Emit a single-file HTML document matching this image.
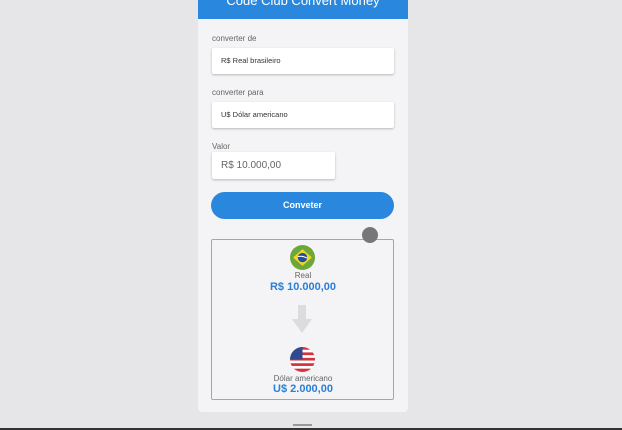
<!DOCTYPE html>
<html><head><style>
*{margin:0;padding:0;box-sizing:border-box}
body{width:622px;height:430px;background:#e6e5e8;font-family:"Liberation Sans",sans-serif;position:relative;overflow:hidden}
.card{position:absolute;left:198px;top:0;width:210px;height:412px;background:#f4f3f5;border-radius:0 0 4px 4px}
.hdr{position:absolute;left:198px;top:0;width:210px;height:19px;background:#2a87de;overflow:hidden}
.hdr span{position:absolute;left:0;right:0;top:-7px;text-align:center;color:#fff;font-size:13px}
.lbl{position:absolute;left:212px;font-size:8px;color:#666}
.box{position:absolute;left:212px;width:182px;height:26px;background:#fff;border-radius:2px;box-shadow:0 1px 2px rgba(0,0,0,.25);font-size:7.5px;color:#333;padding:8px 0 0 9px}
.btn{position:absolute;left:211px;top:192px;width:183px;height:27px;background:#2a87de;border-radius:14px;color:#fff;font-weight:bold;font-size:9px;text-align:center;line-height:27px}
.res{position:absolute;left:211px;top:239px;width:183px;height:161px;border:1px solid #7eaee8;border-radius:2px}
.t{position:absolute;left:198px;width:210px;text-align:center}
</style></head><body>
<div class="card"></div>
<div class="hdr"><span>Code Club Convert Money</span></div>
<div class="lbl" style="top:34px">converter de</div>
<div class="box" style="top:48px">R$ Real brasileiro</div>
<div class="lbl" style="top:88px">converter para</div>
<div class="box" style="top:102px">U$ Dólar americano</div>
<div class="lbl" style="top:142px">Valor</div>
<div class="box" style="top:152px;width:123px;height:27px;font-size:10px;color:#666;padding-top:8px">R$ 10.000,00</div>
<div class="btn">Conveter</div>
<div class="res"></div>
<div style="position:absolute;left:362px;top:227px;width:16px;height:16px;border-radius:50%;background:#777"></div>
<svg style="position:absolute;left:290px;top:245px" width="25" height="25" viewBox="0 0 24 24"><circle cx="12" cy="12" r="12" fill="#6da639"/><path d="M12 4L21 12L12 20L3 12Z" fill="#f5d327"/><circle cx="12" cy="12" r="4.5" fill="#1f4f9c"/><path d="M7.6 11.2Q12 10 16.4 12.6" stroke="#fff" stroke-width="0.9" fill="none"/></svg>
<div class="t" style="top:271px;font-size:8px;color:#666">Real</div>
<div class="t" style="top:281px;font-size:11px;color:#2a7fd6;font-weight:bold">R$ 10.000,00</div>
<svg style="position:absolute;left:292px;top:305px" width="20" height="28" viewBox="0 0 20 28"><path d="M6 0H14V14H20L10 28L0 14H6Z" fill="#dcdbde"/></svg>
<svg style="position:absolute;left:290px;top:347px" width="25" height="25" viewBox="0 0 24 24"><defs><clipPath id="c"><circle cx="12" cy="12" r="12"/></clipPath></defs><g clip-path="url(#c)"><rect width="24" height="24" fill="#fff"/><rect y="0" width="24" height="2.6" fill="#d3323f"/><rect y="5.2" width="24" height="2.6" fill="#d3323f"/><rect y="10.4" width="24" height="2.6" fill="#d3323f"/><rect y="15.6" width="24" height="2.6" fill="#d3323f"/><rect y="20.8" width="24" height="3.2" fill="#d3323f"/><rect width="12" height="12" fill="#2f4a8e"/></g></svg>
<div class="t" style="top:374px;font-size:8px;color:#666">Dólar americano</div>
<div class="t" style="top:383px;font-size:11px;color:#2a7fd6;font-weight:bold">U$ 2.000,00</div>
<div style="position:absolute;left:293px;top:424px;width:19px;height:2px;background:#999"></div>
<div style="position:absolute;left:0;top:428px;width:622px;height:2px;background:#333"></div>
</body></html>
